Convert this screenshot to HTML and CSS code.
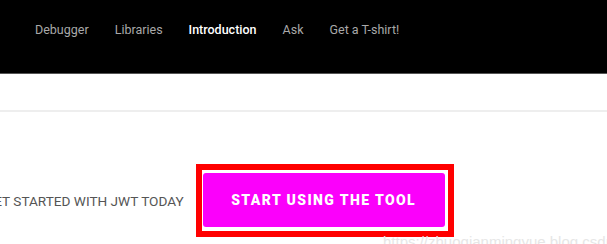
FILE: index.html
```html
<!DOCTYPE html>
<html lang="en">
<head>
  <meta charset="UTF-8" />
  <meta name="viewport" content="width=device-width, initial-scale=1.0"/>
  <title>JWT</title>
  <link rel="stylesheet" href="styles.css">
</head>
<body>
  <header class="topbar">
    <nav class="menu">
      <a href="#">Debugger</a>
      <a href="#">Libraries</a>
      <a href="#" class="active">Introduction</a>
      <a href="#">Ask</a>
      <a href="#">Get a T-shirt!</a>
    </nav>
  </header>
  <div class="band"></div>
  <main class="cta">
    <p class="cta-text">GET STARTED WITH JWT TODAY</p>
    <div class="mark">
      <button class="btn-tool">START USING THE TOOL</button>
    </div>
  </main>
  <span class="watermark">https://zhuoqianmingyue.blog.csdn.net</span>
</body>
</html>
```

FILE: styles.css
```css
body {
  margin: 0;
  background: #fff;
  font-family: Roboto, "Liberation Sans", Arial, sans-serif;
  overflow: hidden;
  height: 244px;
}
.topbar {
  background: #000;
  height: 73px;
  border-bottom: 1px solid #555;
  display: flex;
  align-items: center;
}
.menu {
  display: flex;
  gap: 26px;
  padding-left: 35px;
  margin-top: -14px;
}
.menu a {
  color: #a9a9a9;
  text-decoration: none;
  font-size: 12.5px;
}
.menu a.active {
  color: #fff;
  font-weight: 500;
}
.band {
  height: 36px;
  border-bottom: 2px solid #eee;
}
.cta {
  display: flex;
  align-items: center;
  margin-top: 52px;
  margin-left: -15px;
}
.cta-text {
  margin: 0 12px 0 0;
  color: #555;
  font-size: 13.6px;
  padding-top: 1px;
  white-space: nowrap;
}
.mark {
  border: 6px solid #ff0000;
  padding: 3px 3px 4px 1px;
}
.btn-tool {
  display: block;
  width: 242px;
  height: 54px;
  border: none;
  border-radius: 3px;
  background: #fb00fb;
  color: #fff;
  font-family: inherit;
  font-weight: 900;
  font-size: 14px;
  letter-spacing: 1.4px;
  white-space: nowrap;
}
.watermark {
  position: absolute;
  left: 383px;
  top: 233px;
  color: #e6e6e6;
  font-size: 15px;
  font-family: "Liberation Sans", Arial, sans-serif;
  white-space: nowrap;
}
```
